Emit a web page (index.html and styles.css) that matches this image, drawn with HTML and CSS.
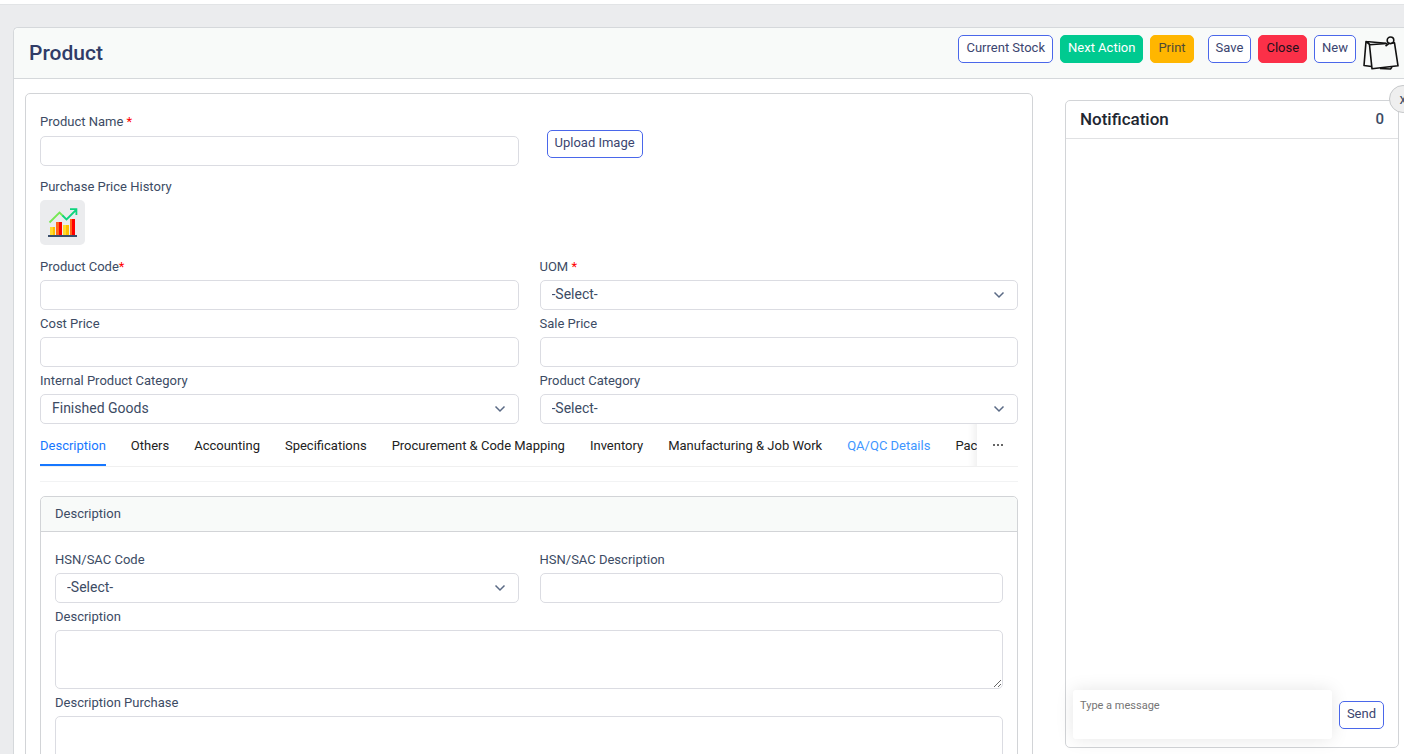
FILE: index.html
```html
<!DOCTYPE html>
<html lang="en">
<head>
<meta charset="utf-8">
<title>Product</title>
<meta name="viewport" content="width=device-width, initial-scale=1">
<link rel="stylesheet" href="styles.css">
</head>
<body>
<div class="page">
  <main class="panel">
    <header class="panel-header">
      <h1 class="title">Product</h1>
      <div class="actions">
        <button type="button" class="btn">Current Stock</button>
        <button type="button" class="btn btn-success">Next Action</button>
        <button type="button" class="btn btn-warning">Print</button>
        <span class="actions-group">
          <button type="button" class="btn">Save</button>
          <button type="button" class="btn btn-danger">Close</button>
          <button type="button" class="btn">New</button>
          <button type="button" class="icon-btn" aria-label="Notes">
            <svg width="36" height="34" viewBox="0 0 36 34" fill="none" stroke="#111" stroke-width="1.6" stroke-linejoin="round">
              <path d="M6.800 8.500 3 5.500 1 29.500 8.500 30.500M3 5.500 23 7.300"/>
              <path d="M28.500 7 31.500 6.800 35 29.800 9 32.800 6.500 8.800 24 7.500"/>
              <path d="M17 32.500 27.500 33 29 31"/>
              <circle cx="27.500" cy="4.300" r="3.300"/>
              <path d="M26.500 7 22.500 10"/>
            </svg>
          </button>
        </span>
      </div>
    </header>

    <div class="content">
      <section class="card form-card">
        <div class="row">
          <div class="field field-name">
            <label for="name">Product Name <span class="req">*</span></label>
            <input id="name" class="control" type="text">
          </div>
          <div class="upload">
            <button type="button" class="btn">Upload Image</button>
          </div>
        </div>

        <div class="history">
          <span class="label">Purchase Price History</span>
          <button type="button" class="chart-btn" aria-label="Purchase Price History">
            <svg width="30" height="30" viewBox="0 0 30 30" fill="none">
              <path fill="#ffda2d" d="M2 19h3v8H2zM15 17h3v10h-3z"/>
              <path fill="#fdbf00" d="M5 19h2v8H5zM18 17h3v10h-3z"/>
              <path fill="#ff641a" d="M8 14h3v13H8zM22 11h2v16h-2z"/>
              <path fill="#ff0000" d="M11 14h3v13h-3zM24 11h3v16h-3z"/>
              <path fill="#384e6b" d="M0 27h29v2H0z"/>
              <path stroke="#76e854" stroke-width="1.800" d="M1.500 14.500 11.500 4.500 15 8"/>
              <path stroke="#0ed47d" stroke-width="1.800" d="M14.500 7.500 18.500 11.500 28 2M22 1.200h6.400V7"/>
            </svg>
          </button>
        </div>

        <div class="row">
          <div class="field">
            <label for="code">Product Code<span class="req">*</span></label>
            <input id="code" class="control" type="text">
          </div>
          <div class="field">
            <label for="uom">UOM <span class="req">*</span></label>
            <div class="select">
              <select id="uom" class="control"><option>-Select-</option></select>
              <svg class="chevron" width="12" height="8" viewBox="0 0 12 8"><path d="M1.500 1.500 6 6l4.500-4.500"/></svg>
            </div>
          </div>
          <div class="field">
            <label for="cost">Cost Price</label>
            <input id="cost" class="control" type="text">
          </div>
          <div class="field">
            <label for="sale">Sale Price</label>
            <input id="sale" class="control" type="text">
          </div>
          <div class="field">
            <label for="internal">Internal Product Category</label>
            <div class="select">
              <select id="internal" class="control"><option>Finished Goods</option></select>
              <svg class="chevron" width="12" height="8" viewBox="0 0 12 8"><path d="M1.500 1.500 6 6l4.500-4.500"/></svg>
            </div>
          </div>
          <div class="field">
            <label for="category">Product Category</label>
            <div class="select">
              <select id="category" class="control"><option>-Select-</option></select>
              <svg class="chevron" width="12" height="8" viewBox="0 0 12 8"><path d="M1.500 1.500 6 6l4.500-4.500"/></svg>
            </div>
          </div>
        </div>

        <div class="tabs">
          <div class="tab-list" role="tablist">
            <button type="button" class="tab active" role="tab" aria-selected="true">Description</button>
            <button type="button" class="tab" role="tab">Others</button>
            <button type="button" class="tab" role="tab">Accounting</button>
            <button type="button" class="tab" role="tab">Specifications</button>
            <button type="button" class="tab" role="tab">Procurement &amp; Code Mapping</button>
            <button type="button" class="tab" role="tab">Inventory</button>
            <button type="button" class="tab" role="tab">Manufacturing &amp; Job Work</button>
            <button type="button" class="tab hovered" role="tab">QA/QC Details</button>
            <button type="button" class="tab" role="tab">Packing</button>
          </div>
          <button type="button" class="tab-more" aria-label="More tabs">
            <svg width="12" height="4" viewBox="0 0 12 4" fill="#333"><circle cx="2" cy="2" r="1"/><circle cx="6" cy="2" r="1"/><circle cx="10" cy="2" r="1"/></svg>
          </button>
        </div>

        <section class="card section">
          <h2 class="section-title">Description</h2>
          <div class="section-body">
            <div class="row">
              <div class="field">
                <label for="hsn">HSN/SAC Code</label>
                <div class="select">
                  <select id="hsn" class="control"><option>-Select-</option></select>
                  <svg class="chevron" width="12" height="8" viewBox="0 0 12 8"><path d="M1.500 1.500 6 6l4.500-4.500"/></svg>
                </div>
              </div>
              <div class="field">
                <label for="hsn-desc">HSN/SAC Description</label>
                <input id="hsn-desc" class="control" type="text">
              </div>
              <div class="field wide">
                <label for="desc">Description</label>
                <textarea id="desc" class="control area"></textarea>
              </div>
              <div class="field wide">
                <label for="desc-purchase">Description Purchase</label>
                <textarea id="desc-purchase" class="control area"></textarea>
              </div>
            </div>
          </div>
        </section>
      </section>

      <aside class="card notify">
        <button type="button" class="dismiss" aria-label="Close notifications">x</button>
        <div class="notify-header">
          <h2 class="notify-title">Notification</h2>
          <span class="notify-count">0</span>
        </div>
        <div class="notify-list"></div>
        <form class="chat">
          <textarea class="chat-input" placeholder="Type a message" aria-label="Message"></textarea>
          <button type="button" class="btn">Send</button>
        </form>
      </aside>
    </div>
  </main>
</div>
</body>
</html>
```
FILE: styles.css
```css
* {
  box-sizing: border-box;
}

body {
  margin: 0;
  height: 100vh;
  overflow: hidden;
  background: #ebecee;
  border-top: 4px solid #fff;
  color: #3c4b64;
  font: 13px/20px Roboto, "Liberation Sans", sans-serif;
}

button,
input,
select,
textarea {
  font-family: inherit;
  color: inherit;
}

.page {
  padding: 22px 0 0 13px;
  border-top: 1px solid #e2e4e6;
}

.panel {
  background: #fff;
  border: 1px solid #d5d8db;
  border-right: 0;
  border-top-left-radius: 5px;
}

.panel-header {
  display: flex;
  justify-content: space-between;
  align-items: flex-start;
  padding: 7px 5px 8px 15px;
  background: #f8faf9;
  border-bottom: 1px solid #d5d8db;
  border-top-left-radius: 5px;
}

.title {
  margin: 0;
  padding-top: 5px;
  font-size: 21px;
  line-height: 26px;
  font-weight: 500;
  color: #303c67;
}

.actions,
.actions-group {
  display: flex;
  gap: 7px;
}

.actions-group {
  margin-left: 7px;
}

.btn {
  height: 28px;
  padding: 0 7px 2px;
  border: 1px solid #4a67ea;
  border-radius: 5px;
  background: #fff;
  color: #3b4570;
  font-size: 13px;
  line-height: 20px;
  white-space: nowrap;
}

.btn-success {
  background: #00ca90;
  border-color: #00ca90;
  color: #fff;
}

.btn-warning {
  background: #ffb600;
  border-color: #ffb600;
  color: #4f4a35;
}

.btn-danger {
  background: #fb3048;
  border-color: #fb3048;
  color: #25101c;
}

.icon-btn {
  display: flex;
  padding: 1px 0 0;
  border: 0;
  background: none;
}

.content {
  display: grid;
  grid-template-columns: minmax(0, 1fr) 334px;
  gap: 32px;
  align-items: start;
  padding: 14px 5px 14px 11px;
}

.card {
  border: 1px solid #d2d4d7;
  border-radius: 5px;
  background: #fff;
}

.form-card {
  padding: 18px 14px 14px;
}

.row {
  display: grid;
  grid-template-columns: repeat(2, minmax(0, 1fr));
  gap: 4px 21px;
}

.field {
  display: flex;
  flex-direction: column;
  gap: 3px;
}

.field-name {
  gap: 4px;
}

.wide {
  grid-column: 1 / -1;
}

.req {
  color: #f00;
}

.control {
  width: 100%;
  height: 30px;
  padding: 0 11px 3px;
  border: 1px solid #dbdce2;
  border-radius: 5px;
  background: #fff;
  font-size: 14px;
}

.area {
  height: 59px;
  display: block;
}

.select {
  display: grid;
  align-items: center;
}

.select > * {
  grid-area: 1 / 1;
}

.select .control {
  appearance: none;
}

.chevron {
  justify-self: end;
  margin-right: 13px;
  fill: none;
  stroke: #5a6a85;
  stroke-width: 1.5;
  pointer-events: none;
}

.upload {
  padding: 18px 0 0 7px;
}

.history {
  display: flex;
  flex-direction: column;
  align-items: flex-start;
  gap: 3px;
  padding: 11px 0 12px;
}

.chart-btn {
  display: grid;
  place-items: center;
  width: 45px;
  height: 45px;
  padding: 0;
  border: 0;
  border-radius: 5px;
  background: #ebecee;
}

.tabs {
  display: flex;
  margin-bottom: 14px;
  padding-bottom: 14px;
  border-bottom: 1px solid #f2f3f4;
}

.tab-list {
  position: relative;
  display: flex;
  flex: 1;
  gap: 25px;
  min-width: 0;
  overflow: hidden;
  border-bottom: 1px solid #f0f0f0;
}

.tab-list::after {
  content: "";
  position: absolute;
  top: 0;
  right: 0;
  bottom: 0;
  width: 10px;
  box-shadow: inset -10px 0 8px -8px rgba(0, 0, 0, 0.08);
}

.tab {
  flex: none;
  padding: 12px 0 8px;
  border: 0;
  border-bottom: 2px solid transparent;
  background: none;
  color: #222;
  font-size: 13px;
  line-height: 20px;
}

.tab.active {
  border-color: #1677ff;
  color: #1677ff;
}

.tab.hovered {
  color: #4096ff;
}

.tab-more {
  display: grid;
  place-items: center;
  width: 41px;
  padding: 0;
  border: 0;
  border-bottom: 1px solid #f0f0f0;
  background: #fff;
}

.section-title {
  margin: 0;
  padding: 7px 14px;
  background: #f8faf9;
  border-bottom: 1px solid #d2d4d7;
  border-radius: 5px 5px 0 0;
  font-size: 13px;
  line-height: 20px;
  font-weight: 400;
}

.section-body {
  padding: 18px 14px 14px;
}

.notify {
  position: relative;
  display: flex;
  flex-direction: column;
  height: calc(100vh - 106px);
  margin-top: 7px;
}

.dismiss {
  position: absolute;
  top: -16px;
  right: -19px;
  width: 28px;
  height: 28px;
  padding: 0;
  border: 1px solid #c6c8ca;
  border-radius: 50%;
  background: #efefef;
  font-size: 14px;
}

.notify-header {
  display: flex;
  justify-content: space-between;
  padding: 8px 14px;
  border-bottom: 1px solid #e0e1e3;
}

.notify-title,
.notify-count {
  margin: 0;
  line-height: 21px;
  font-weight: 500;
}

.notify-title {
  font-size: 17px;
  color: #212631;
}

.notify-count {
  font-size: 15px;
}

.notify-list {
  flex: 1;
}

.chat {
  display: flex;
  align-items: center;
  gap: 7px;
  padding: 8px 14px 8px 7px;
}

.chat-input {
  flex: 1;
  min-width: 0;
  height: 49px;
  padding: 7px;
  border: 0;
  border-radius: 3px;
  background: #fff;
  box-shadow: 0 0 18px rgba(0, 0, 0, 0.1);
  font-size: 11px;
  line-height: 18px;
  resize: none;
}
```
